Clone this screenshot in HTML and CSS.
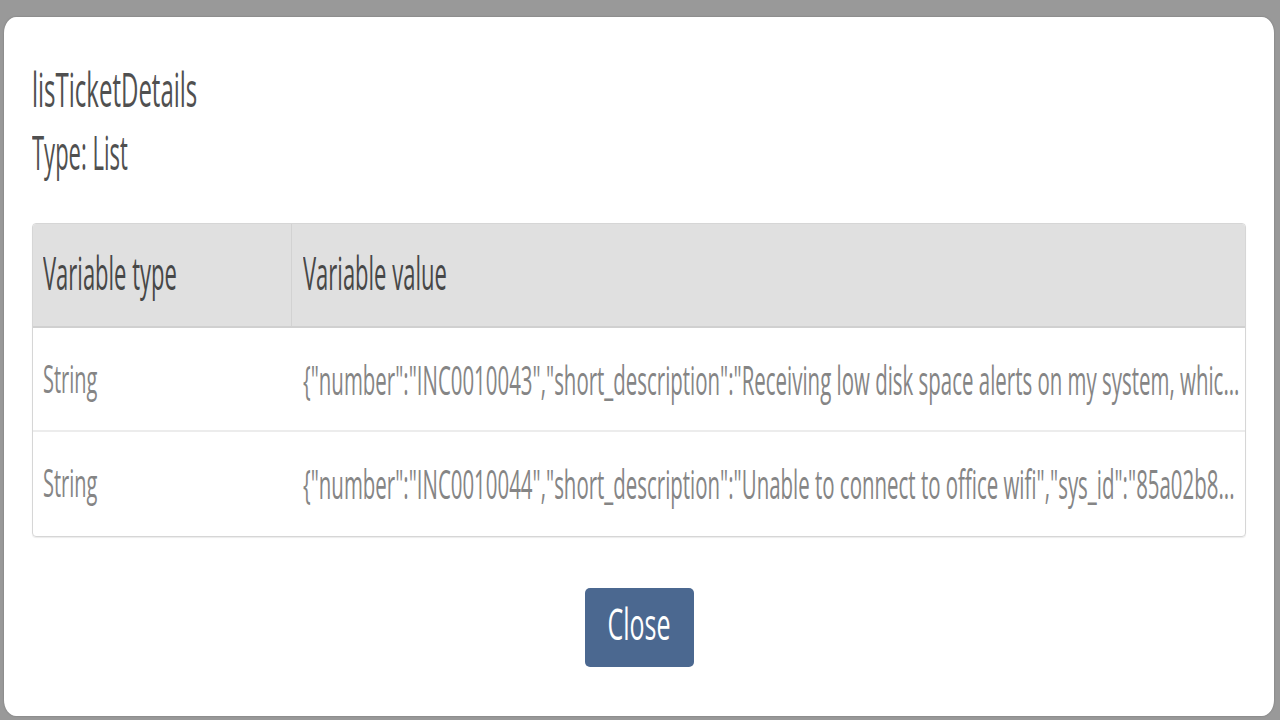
FILE: index.html
```html
<!DOCTYPE html>
<html lang="en">
<head>
<meta charset="utf-8">
<title>lisTicketDetails</title>
<link rel="stylesheet" href="styles.css">
</head>
<body>
<div class="overlay">
  <div class="modal">
    <div class="title"><div class="stretch">lisTicketDetails</div></div>
    <div class="type"><div class="stretch">Type: List</div></div>
    <div class="vtable">
      <div class="vrow vhead">
        <div class="vcell vcell-type"><div class="stretch">Variable type</div></div>
        <div class="vcell vcell-value"><div class="stretch">Variable value</div></div>
      </div>
      <div class="vrow">
        <div class="vcell vcell-type"><div class="stretch">String</div></div>
        <div class="vcell vcell-value"><div class="stretch">{"number":"INC0010043","short_description":"Receiving low disk space alerts on my system, whic...</div></div>
      </div>
      <div class="vrow">
        <div class="vcell vcell-type"><div class="stretch">String</div></div>
        <div class="vcell vcell-value"><div class="stretch">{"number":"INC0010044","short_description":"Unable to connect to office wifi","sys_id":"85a02b8...</div></div>
      </div>
    </div>
    <div class="actions">
      <button class="btn-close" type="button"><span class="stretch">Close</span></button>
    </div>
  </div>
</div>
</body>
</html>
```
FILE: styles.css
```css
* { box-sizing: border-box; }

html, body {
  margin: 0;
  padding: 0;
}

body {
  background: #999999;
  font-family: "Open Sans", "Noto Sans", sans-serif;
  width: 1280px;
  height: 720px;
  overflow: hidden;
}

.overlay {
  padding: 17px 6px 4px 4px;
}

.modal {
  background: #ffffff;
  border-radius: 12px / 16px;
  height: 699px;
  padding: 40px 28px 0 28px;
  box-shadow: 0 0 2px rgba(0, 0, 0, 0.25);
}

.stretch {
  transform-origin: 50% 50%;
}

.title {
  height: 63px;
  line-height: 63px;
  font-size: 24px;
  color: #505050;
}
.title .stretch { transform: scaleY(1.98); }

.type {
  height: 63px;
  line-height: 63px;
  font-size: 22px;
  color: #505050;
}
.type .stretch { transform: scaleY(2.14); }

.vtable {
  margin-top: 40px;
  border: 1px solid #d6d6d6;
  border-radius: 4px;
  overflow: hidden;
  box-shadow: 0 1px 1px rgba(0, 0, 0, 0.08);
}

.vrow {
  display: grid;
  grid-template-columns: 259px 1fr;
  border-bottom: 2px solid #ececec;
}
.vrow:last-child { border-bottom-color: transparent; }

.vhead {
  background: #e0e0e0;
  border-bottom-color: #d0d0d0;
}

.vcell {
  padding: 31px 7px 31px 10px;
  line-height: 40px;
  font-size: 20px;
  color: #858585;
  min-width: 0;
}
.vcell .stretch {
  white-space: nowrap;
  overflow: hidden;
  text-overflow: ellipsis;
  transform: scaleY(1.95);
}
.vcell-value {
  padding-left: 11px;
  padding-right: 5px;
  font-size: 20.45px;
}

.vhead .vcell {
  padding-top: 27px;
  padding-bottom: 35px;
  font-size: 22px;
  color: #474747;
}
.vhead .vcell .stretch { transform: scaleY(2.1); }
.vhead .vcell-type { border-right: 1px solid #d2d2d2; }

.actions {
  display: flex;
  justify-content: center;
  margin-top: 51px;
}

.btn-close {
  width: 109px;
  height: 79px;
  padding: 14px 0 25px;
  border: none;
  border-radius: 5px;
  background: #4b6890;
  color: #ffffff;
  font-family: "Open Sans", "Noto Sans", sans-serif;
  font-size: 25px;
  line-height: 40px;
}
.btn-close .stretch {
  display: inline-block;
  transform: scaleY(1.75);
}
```
